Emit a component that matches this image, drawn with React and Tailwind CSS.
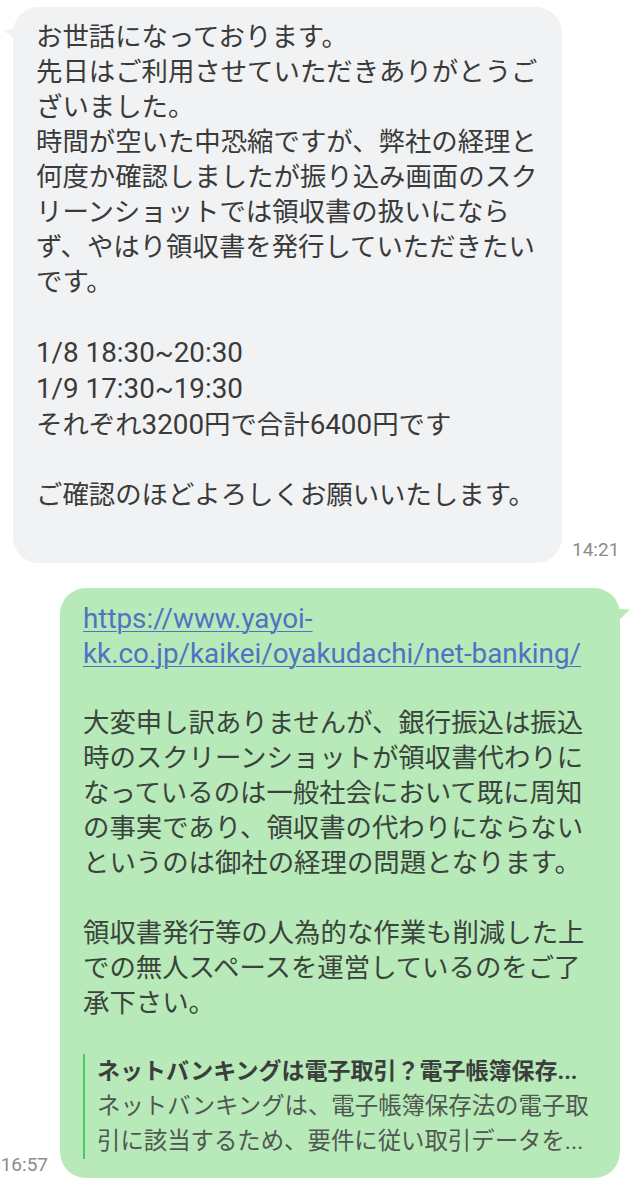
function L({ children }) {
  return <span className="text-[27.8px] leading-[35px]">{children}</span>;
}

export default function App() {
  return (
    <div className="min-h-[1200px] w-[635px] overflow-hidden bg-white font-['Roboto','Noto_Sans_CJK_JP',sans-serif] text-[26.4px] leading-[35px]">
      <div className="flex items-end pl-[13px] pt-[7px]">
        <div className="relative w-[549px] shrink-0 rounded-[26px] bg-[#f1f2f4] pb-[50px] pl-[23px] pr-[20px] pt-[13px] text-[#3a3a3a]">
          <svg className="absolute left-[-10px] top-[20px]" width="14" height="14" viewBox="0 0 14 14">
            <path d="M14 0.5 L0 3.5 L14 13 Z" fill="#f1f2f4" />
          </svg>
          <div>お世話になっております。</div>
          <div>先日はご利用させていただきありがとうご</div>
          <div>ざいました。</div>
          <div>時間が空いた中恐縮ですが、弊社の経理と</div>
          <div>何度か確認しましたが振り込み画面のスク</div>
          <div>リーンショットでは領収書の扱いになら</div>
          <div>ず、やはり領収書を発行していただきたい</div>
          <div>です。</div>
          <div className="h-[35px]" />
          <div><L>1/8 18:30~20:30</L></div>
          <div><L>1/9 17:30~19:30</L></div>
          <div>それぞれ<L>3200</L>円で合計<L>6400</L>円です</div>
          <div className="h-[35px]" />
          <div>ご確認のほどよろしくお願いいたします。</div>
        </div>
        <span className="mb-[2px] ml-[10px] whitespace-nowrap text-[19px] leading-[22px] text-[#8c8c8c]">14:21</span>
      </div>

      <div className="mt-[25px] flex items-end justify-end pr-[15px]">
        <span className="mb-[2px] mr-[12px] whitespace-nowrap text-[19px] leading-[22px] text-[#8c8c8c]">16:57</span>
        <div className="relative w-[560px] shrink-0 rounded-[26px] bg-[#b8e9b9] pb-[19px] pl-[23px] pr-[20px] pt-[13px] text-[#3a443c]">
          <svg className="absolute right-[-12px] top-[19px]" width="14" height="14" viewBox="0 0 14 14">
            <path d="M0 2 L12 2.5 L0 14 Z" fill="#b8e9b9" />
          </svg>
          <div className="text-[27.8px] text-[#4e74c2] underline decoration-1 underline-offset-[3px]">
            <div>https://www.yayoi-</div>
            <div>kk.co.jp/kaikei/oyakudachi/net-banking/</div>
          </div>
          <div className="h-[35px]" />
          <div>大変申し訳ありませんが、銀行振込は振込</div>
          <div>時のスクリーンショットが領収書代わりに</div>
          <div>なっているのは一般社会において既に周知</div>
          <div>の事実であり、領収書の代わりにならない</div>
          <div>というのは御社の経理の問題となります。</div>
          <div className="h-[35px]" />
          <div>領収書発行等の人為的な作業も削減した上</div>
          <div>での無人スペースを運営しているのをご了</div>
          <div>承下さい。</div>
          <div className="mt-[33px] border-l-2 border-[#4cc764] pl-[12px]">
            <div className="whitespace-nowrap text-[23px] font-bold leading-[35px] text-[#3b3f3c]">ネットバンキングは電子取引？電子帳簿保存...</div>
            <div className="whitespace-nowrap text-[23.4px] leading-[35px] text-[#4f5751]">ネットバンキングは、電子帳簿保存法の電子取</div>
            <div className="whitespace-nowrap text-[23.4px] leading-[35px] text-[#4f5751]">引に該当するため、要件に従い取引データを...</div>
          </div>
        </div>
      </div>
    </div>
  );
}
